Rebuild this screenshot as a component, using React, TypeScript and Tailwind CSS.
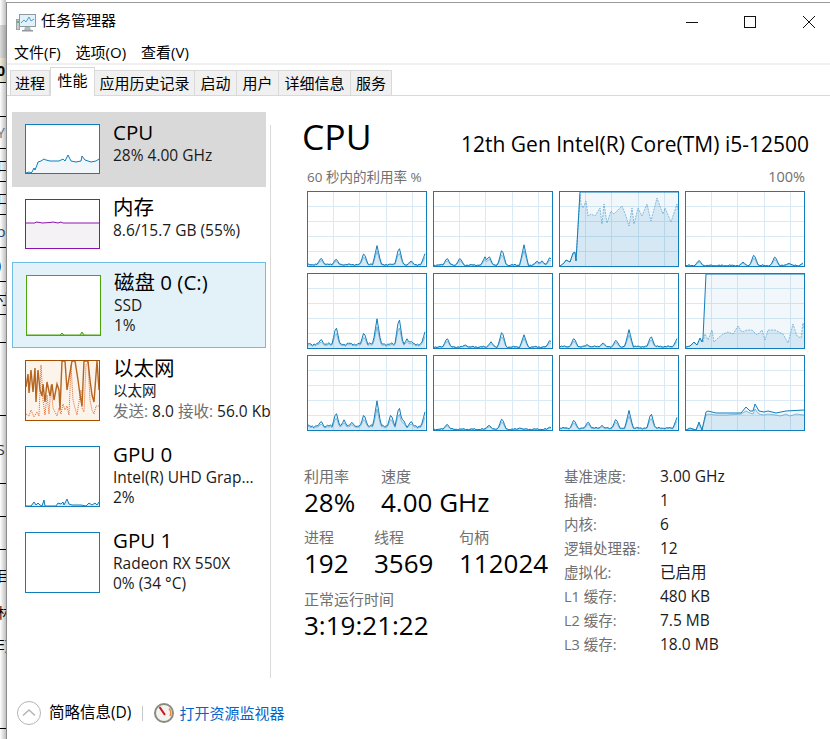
type Pt = [number, number];

// build a noisy low line from a list of spikes, x step 1.5
function spikes(peaks: Pt[], base: number, seed: number): Pt[] {
  const out: Pt[] = [];
  for (let x = 0; x <= 118; x += 1.5) {
    const noise = (Math.sin(x * 1.7 + seed) + Math.sin(x * 0.6 + seed * 2)) * 0.5 + 0.6;
    let h = Math.max(0, base + noise * (base > 2 ? 1.5 : 0.8));
    for (const [px, ph] of peaks) {
      const d = Math.abs(x - px);
      if (d < 4.5) h = Math.max(h, ph * (1 - d / 4.5) + base * 0.4);
    }
    out.push([x, h]);
  }
  return out;
}

function parse(s: string): Pt[] {
  return s.split(" ").map((p) => p.split(",").map(Number) as Pt);
}

function linePts(data: Pt[], height: number) {
  return data.map(([x, h]) => `${x},${height - h}`).join(" ");
}

function areaPts(data: Pt[], height: number) {
  const last = data[data.length - 1][0];
  return `${data[0][0]},${height} ${linePts(data, height)} ${last},${height}`;
}

const scale = (d: Pt[], k: number): Pt[] => d.map(([x, h]) => [x, h * k]);

const core = (peaks: Pt[], base: number, seed: number) => {
  const main = spikes(peaks, base, seed);
  return { main, kernel: scale(main, 0.72) };
};

const highLeft3 = parse("0,0 4,3 6,6 10,4 13,13 15,14 16,5 20,74 118,74");
const highLeft8 = parse("0,1 4,2 8,6 11,3 14,10 16,6 17,10 20,74 118,74");

const cores: { main: Pt[]; kernel: Pt[]; dashed?: boolean }[] = [
  core([[13, 8], [28, 7], [56, 13], [69, 20], [91, 19], [103, 5], [117, 12]], 1, 1),
  core([[13, 8], [26, 8], [51, 9], [55, 10], [68, 17], [90, 21], [103, 5], [108, 5], [116, 9]], 0.5, 2),
  {
    main: highLeft3,
    dashed: true,
    kernel: parse(
      "0,0 4,3 6,6 10,4 13,12 15,13 16,5 20,72 21,62 23,58 26,65 28,50 31,52 35,50 40,58 42,42 44,62 47,43 51,55 54,52 62,60 66,50 69,40 72,58 74,42 78,58 82,50 87,62 91,45 97,68 103,52 105,58 111,44 117,62 118,56"
    ),
  },
  core([[13, 6], [57, 4], [68, 12], [89, 10], [103, 3], [117, 3]], 0, 3),
  core([[13, 8], [28, 21], [41, 4], [56, 15], [69, 28], [91, 30], [99, 8], [103, 6], [117, 15]], 3, 4),
  core([[13, 10], [31, 3], [57, 6], [68, 17], [90, 13], [116, 8]], 0.6, 5),
  core([[14, 10], [27, 3], [43, 5], [56, 8], [69, 18], [91, 12], [117, 9]], 1, 6),
  {
    main: highLeft8,
    dashed: true,
    kernel: parse(
      "0,1 4,2 8,5 11,3 14,9 16,6 17,6 19,14 22,8 26,18 28,6 32,10 37,14 42,16 47,14 52,22 56,16 61,18 66,18 71,13 76,18 79,8 82,18 89,18 97,14 102,5 107,24 111,12 115,10 117,25 118,20"
    ),
  },
  core([[13, 8], [28, 17], [36, 9], [44, 7], [56, 15], [69, 28], [83, 15], [91, 23], [95, 10], [103, 8], [117, 17]], 3, 7),
  core([[13, 6], [55, 5], [68, 12], [86, 2], [116, 3]], 0.3, 8),
  core([[14, 10], [28, 8], [42, 4], [56, 11], [69, 19], [91, 17], [117, 12]], 1.5, 9),
  {
    main: parse(
      "0,0 4,2 10,0 13,8 16,0 20,18 22,19 30,17 40,17 55,17 60,23 64,19 67,19 69,26 73,19 78,18 82,19 90,17 100,19 118,20"
    ),
    kernel: parse(
      "0,0 4,1 10,0 13,6 16,0 20,15 22,16 30,15 40,15 55,16 60,19 64,17 67,16 69,21 73,16 78,15 82,16 90,15 94,14 100,16 104,14 110,16 118,15"
    ),
  },
];

function CoreGraph({ main, kernel, dashed }: { main: Pt[]; kernel: Pt[]; dashed?: boolean }) {
  return (
    <div className="h-[76px] w-[120px] border border-[#117dbb] bg-white">
      <svg width="118" height="74" viewBox="0 0 118 74" className="block">
        {[25.5, 51.5, 78.5, 104.5].map((x) => (
          <line key={x} x1={x} x2={x} y1="0" y2="74" stroke="#d9eaf4" />
        ))}
        {[14.5, 29.5, 44.5, 59.5].map((y) => (
          <line key={y} x1="0" x2="118" y1={y} y2={y} stroke="#d9eaf4" />
        ))}
        <polygon points={areaPts(main, 74)} fill="#117dbb" fillOpacity="0.06" />
        <polygon points={areaPts(kernel, 74)} fill="#117dbb" fillOpacity="0.12" />
        <polyline
          points={linePts(kernel, 74)}
          fill="none"
          stroke="#117dbb"
          strokeOpacity="0.45"
          strokeDasharray={dashed ? "2 1" : undefined}
        />
        <polyline points={linePts(main, 74)} fill="none" stroke="#117dbb" />
      </svg>
    </div>
  );
}

function Thumb({ h, border, children }: { h: number; border: string; children?: React.ReactNode }) {
  return (
    <div className={`mt-3 shrink-0 border ${border}`} style={{ height: h }}>
      <svg width="73" height={h - 2} viewBox={`0 0 73 ${h - 2}`} className="block">
        {children}
      </svg>
    </div>
  );
}

const cpuThumb = parse(
  "0,0 3,1 5,0 6,1 8,5 9,3 11,8 12,11 15,12 18,14 20,13 24,12 33,12 35,13 37,14 39,12 42,18 45,12 50,11 55,12 56,17 59,13 62,12 65,11 70,12 73,14"
);
const memThumb = parse("0,25 9,25 10,26 14,25.5 16,25 24,25.5 27,26 32,25 35,26 37,25 73,25");
const diskThumb = parse("0,0 33,0 35,2 37,0 53,0 55,3 57,0 73,0");
const gpuThumb = parse(
  "0,0 5,0 8,4 10,1 12,3 14,1 16,0 18,6 19,0 30,0 32,3 35,2 37,4 38,1 41,7 43,2 46,1 50,1 55,1 60,0 63,3 66,1 69,3 71,1 73,4"
);
const ethSend = parse(
  "0,33 2,46 3,27 5,50 7,28 9,52 10,18 12,50 14,30 16,24 17,36 19,18 21,38 24,24 26,36 28,20 31,36 33,30 34,10 36,59 39,59 41,30 43,42 46,59 49,59 52,40 54,25 56,14 58,59 60,59 62,59 64,40 66,25 68,18 71,59 73,30"
);
const ethRecv = parse(
  "0,6 3,4 5,10 8,3 11,8 13,4 15,55 17,20 19,5 21,25 23,6 25,35 27,12 29,8 31,4 33,12 35,6 37,16 39,10 41,14 43,5 45,55 47,20 49,12 51,5 53,18 55,30 56,12 58,8 60,55 62,58 64,20 66,10 68,6 70,14 73,14"
);

function Line({ data, h, color, fill }: { data: Pt[]; h: number; color: string; fill: string }) {
  return (
    <>
      <polygon points={areaPts(data, h)} fill={fill} />
      <polyline points={linePts(data, h)} fill="none" stroke={color} />
    </>
  );
}

function SideItem({
  height,
  active,
  thumb,
  title,
  children,
}: {
  height: string;
  active?: "gray" | "blue";
  thumb: React.ReactNode;
  title: string;
  children: React.ReactNode;
}) {
  return (
    <div
      className={`flex w-[254px] gap-[13px] whitespace-nowrap pl-[13px] ${height} ${
        active === "gray"
          ? "bg-[#d9d9d9]"
          : active === "blue"
            ? "border border-[#6fbce8] bg-[#e3f2f9] pl-[12px]"
            : ""
      }`}
    >
      <div className="w-[75px] shrink-0">{thumb}</div>
      <div className={`${active === "blue" ? "pt-[6px]" : "pt-[7px]"} text-[15.5px] leading-[20px] text-[#1a1a1a]`}>
        <div className="h-[26px] text-[20.5px] leading-[26px] text-black">{title}</div>
        {children}
      </div>
    </div>
  );
}

const tabs = ["进程", "性能", "应用历史记录", "启动", "用户", "详细信息", "服务"];
const tabWidths = ["w-[40px]", "w-[45px]", "w-[100px]", "w-[42px]", "w-[42px]", "w-[72px]", "w-[41px]"];

const specs: [string, string][] = [
  ["基准速度:", "3.00 GHz"],
  ["插槽:", "1"],
  ["内核:", "6"],
  ["逻辑处理器:", "12"],
  ["虚拟化:", "已启用"],
  ["L1 缓存:", "480 KB"],
  ["L2 缓存:", "7.5 MB"],
  ["L3 缓存:", "18.0 MB"],
];

// bits of the window behind, cut off at the left edge
const behind: [string, string, string][] = [
  ["h-[25px]", "", "bg-white"],
  ["h-[33px]", "", "bg-[#dcdcdc]"],
  ["h-[25px] border-b border-black", "0", "bg-[#f1efd9] font-bold"],
  ["h-[34px] border-b border-black", "", ""],
  ["h-[32px] border-b border-black", "Y", "text-[#7a7a7a]"],
  ["h-[33px] border-b border-black", "口", ""],
  ["h-[33px] border-b border-black", "口", ""],
  ["h-[33px] border-b border-black", "o(", "text-[#17507f]"],
  ["h-[34px] border-b border-black", ")", ""],
  ["h-[33px] border-b border-black", "寸", ""],
  ["h-[28px] border-b border-black", "", ""],
  ["h-[73px] border-b border-black", "", ""],
  ["h-[68px] border-b border-black", "S", "text-[#333]"],
  ["h-[33px] border-b border-black", "", ""],
  ["h-[33px] border-b border-black", "", ""],
  ["h-[50px]", "目", ""],
  ["h-[24px]", "林", ""],
  ["h-[40px]", "E)", ""],
  ["h-[65px] border-b border-black", "", ""],
];

function Stat({ label, value, width }: { label: string; value: string; width: string }) {
  return (
    <div className={`${width} shrink-0 whitespace-nowrap`}>
      <div className="text-[15px] leading-[20px] text-[#707070]">{label}</div>
      <div className="text-[26px] leading-[32px] text-black">{value}</div>
    </div>
  );
}

export default function App() {
  return (
    <div className="flex h-[739px] w-[830px] overflow-hidden bg-white font-[family-name:'Open_Sans','Noto_Sans_CJK_SC',sans-serif] text-black">
      <div className="relative w-[6px] shrink-0 overflow-hidden bg-white">
        {behind.map(([row, text, extra], i) => (
          <div key={i} className={`flex items-center whitespace-nowrap text-[14px] ${row} ${extra}`}>
            <span className="-ml-[3px]">{text}</span>
          </div>
        ))}
        <div className="absolute inset-0 bg-gradient-to-r from-transparent to-black/25" />
      </div>

      <div className="mt-[2px] flex w-[824px] flex-col border-t border-l border-t-[#9a9a9a] border-l-[#8c8c8c]">
        {/* title bar */}
        <div className="flex h-[37px] shrink-0 items-center pl-[9px] pr-[15px]">
          <svg width="20" height="18" viewBox="0 0 20 18" className="mr-[5px] mt-[3px]">
            <rect x="0.5" y="5.5" width="3" height="10" fill="#c9cfd0" stroke="#9aa3a5" />
            <rect x="1" y="7" width="2" height="2" fill="#5dbb63" />
            <rect x="3.5" y="0.5" width="16" height="12" fill="#e3f2fa" stroke="#8f9aa0" />
            <polyline points="5,9 8,6 10,8 13,3 15,7 18,5" fill="none" stroke="#4f9fcf" />
            <path d="M9 13h5l1 3h-7z" fill="#b4babc" />
            <rect x="6" y="16" width="11" height="1.5" fill="#8f9aa0" />
          </svg>
          <span className="-mt-[3px] text-[15px] leading-[20px]">任务管理器</span>
          <svg width="12" height="12" viewBox="0 0 12 12" className="ml-auto">
            <line x1="0" x2="12" y1="6.5" y2="6.5" stroke="#111" />
          </svg>
          <svg width="12" height="12" viewBox="0 0 12 12" className="ml-[46px]">
            <rect x="0.5" y="0.5" width="11" height="11" fill="none" stroke="#111" />
          </svg>
          <svg width="12" height="12" viewBox="0 0 12 12" className="ml-[47px]">
            <path d="M0 0L12 12M12 0L0 12" stroke="#111" />
          </svg>
        </div>

        {/* menu */}
        <div className="flex h-[25px] shrink-0 items-center gap-[15px] border-b-2 border-[#f0f0f0] pl-[7px] pt-[1px] text-[15px]">
          <span>文件(F)</span>
          <span>选项(O)</span>
          <span>查看(V)</span>
        </div>

        {/* tabs */}
        <div className="flex h-[31px] shrink-0 items-end border-b border-[#d9d9d9] pl-[3px]">
          {tabs.map((t, i) => (
            <div
              key={t}
              className={`${tabWidths[i]} flex items-center justify-center border-t border-r border-[#d9d9d9] text-[15px] ${
                i === 1
                  ? "-mb-px h-[29px] border-l bg-white pb-[3px]"
                  : `h-[25px] bg-[#f0f0f0] ${i === 0 ? "border-l" : ""}`
              }`}
            >
              {t}
            </div>
          ))}
        </div>

        {/* body */}
        <div className="flex h-[582px] shrink-0">
          <div className="w-[263px] shrink-0 overflow-hidden pl-[5px] pt-[16px]">
            <SideItem
              height="h-[75px]"
              active="gray"
              title="CPU"
              thumb={
                <Thumb h={50} border="border-[#117dbb]">
                  <rect width="73" height="48" fill="#fff" />
                  <Line data={cpuThumb} h={48} color="#117dbb" fill="#f1f6fa" />
                </Thumb>
              }
            >
              <div>28% 4.00 GHz</div>
            </SideItem>
            <SideItem
              height="h-[75px]"
              title="内存"
              thumb={
                <Thumb h={50} border="border-[#8b12ae]">
                  <Line data={memThumb} h={48} color="#8b12ae" fill="#f4f2f4" />
                </Thumb>
              }
            >
              <div>8.6/15.7 GB (55%)</div>
            </SideItem>
            <SideItem
              height="h-[86px]"
              active="blue"
              title="磁盘 0 (C:)"
              thumb={
                <Thumb h={61} border="border-[#4da60c]">
                  <rect width="73" height="59" fill="#fff" />
                  <Line data={diskThumb} h={59} color="#4da60c" fill="#a5d68a" />
                </Thumb>
              }
            >
              <div>SSD</div>
              <div>1%</div>
            </SideItem>
            <SideItem
              height="h-[86px]"
              title="以太网"
              thumb={
                <Thumb h={61} border="border-[#a74f01]">
                  <rect width="73" height="59" fill="#fcf3eb" />
                  <polyline points={linePts(ethRecv, 59)} fill="none" stroke="#e0662b" strokeDasharray="1 1" />
                  <polyline points={linePts(ethSend, 59)} fill="none" stroke="#b5651d" strokeWidth="1.4" />
                </Thumb>
              }
            >
              <div className="text-[14.5px]">以太网</div>
              <div className="text-[15.5px]">
                <span className="text-[#707070]">发送:</span> 8.0 <span className="text-[#707070]">接收:</span> 56.0 Kb
              </div>
            </SideItem>
            <SideItem
              height="h-[86px]"
              title="GPU 0"
              thumb={
                <Thumb h={61} border="border-[#117dbb]">
                  <Line data={gpuThumb} h={59} color="#117dbb" fill="#d9e6f0" />
                </Thumb>
              }
            >
              <div>Intel(R) UHD Grap...</div>
              <div>2%</div>
            </SideItem>
            <SideItem height="h-[86px]" title="GPU 1" thumb={<Thumb h={61} border="border-[#117dbb]" />}>
              <div>Radeon RX 550X</div>
              <div>0% (34 °C)</div>
            </SideItem>
          </div>
          <div className="mt-[29px] h-[553px] w-px shrink-0 bg-[#d9d9d9]" />

          <div className="ml-[31px] w-[507px] shrink-0">
            <div className="flex h-[60px] items-end justify-between">
              <span className="-mb-[3px] text-[35.5px] leading-[46px]">CPU</span>
              <span className="-mb-[1px] text-[21px] leading-[26px]">12th Gen Intel(R) Core(TM) i5-12500</span>
            </div>
            <div className="ml-[5px] mt-[11px] flex h-[20px] w-[498px] items-center justify-between text-[13.5px] text-[#707070]">
              <span>60 秒内的利用率 %</span>
              <span className="text-[14.5px]">100%</span>
            </div>
            <div className="ml-[5px] mt-[4px] grid grid-cols-[repeat(4,120px)] gap-[6px]">
              {cores.map((c, i) => (
                <CoreGraph key={i} {...c} />
              ))}
            </div>

            <div className="mt-[34px] flex">
              <div className="ml-[2px] w-[260px] shrink-0 pt-[1px]">
                <div className="flex">
                  <Stat label="利用率" value="28%" width="w-[77px]" />
                  <Stat label="速度" value="4.00 GHz" width="w-[160px]" />
                </div>
                <div className="mt-[9px] flex">
                  <Stat label="进程" value="192" width="w-[70px]" />
                  <Stat label="线程" value="3569" width="w-[85px]" />
                  <Stat label="句柄" value="112024" width="w-[100px]" />
                </div>
                <div className="mt-[10px]">
                  <Stat label="正常运行时间" value="3:19:21:22" width="w-[200px]" />
                </div>
              </div>
              <div className="w-[240px]">
                {specs.map(([k, v]) => (
                  <div key={k} className="flex h-[24px] items-center whitespace-nowrap">
                    <span className="w-[96px] shrink-0 text-[14.5px] text-[#707070]">{k}</span>
                    <span className="text-[15.5px] text-[#1a1a1a]">{v}</span>
                  </div>
                ))}
              </div>
            </div>
          </div>
        </div>

        {/* footer */}
        <div className="flex flex-1 items-center pl-[10px] pt-[9px]">
          <svg width="24" height="24" viewBox="0 0 24 24">
            <circle cx="12" cy="12" r="11.5" fill="none" stroke="#b4b4b4" />
            <polyline points="6,14.5 12,9 18,14.5" fill="none" stroke="#b4b4b4" strokeWidth="1.5" />
          </svg>
          <span className="ml-[8px] text-[15.5px]">简略信息(D)</span>
          <div className="ml-[11px] h-[15px] w-px bg-[#c8c8c8]" />
          <svg width="20" height="20" viewBox="0 0 20 20" className="ml-[11px]">
            <circle cx="10" cy="10" r="9" fill="#f4f2ee" stroke="#8a8a80" strokeWidth="2" />
            <path d="M15 5.5A7 7 0 0 1 16 13" fill="none" stroke="#e88b3a" strokeWidth="1.5" />
            <line x1="5.5" y1="4" x2="11" y2="12" stroke="#c8161d" strokeWidth="2" />
          </svg>
          <span className="ml-[5px] text-[15px] text-[#0066cc]">打开资源监视器</span>
        </div>
      </div>
    </div>
  );
}
